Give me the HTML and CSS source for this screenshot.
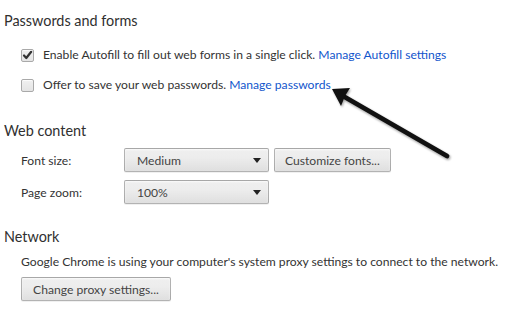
FILE: index.html
```html
<!DOCTYPE html>
<html>
<head>
<meta charset="utf-8">
<link rel="stylesheet" href="styles.css">
</head>
<body>
<div class="page">
  <section class="sec">
    <h3 class="sec-title">Passwords and forms</h3>
    <div class="sec-body">
      <div class="cb-row first">
        <span class="cb">
          <svg width="13" height="13" viewBox="0 0 13 13"><path d="M3 6.5 L5.3 9 L10.2 2.8" fill="none" stroke="#333" stroke-width="2.2" stroke-linecap="round" stroke-linejoin="round"/></svg>
        </span>
        <span class="cb-text">Enable Autofill to fill out web forms in a single click. <a class="link">Manage Autofill settings</a></span>
      </div>
      <div class="cb-row">
        <span class="cb"></span>
        <span class="cb-text">Offer to save your web passwords. <a class="link">Manage passwords</a></span>
      </div>
    </div>
  </section>

  <section class="sec web">
    <h3 class="sec-title">Web content</h3>
    <div class="sec-body">
      <div class="field-row first">
        <span class="field-label">Font size:</span>
        <span class="select">Medium<span class="caret"></span></span>
        <span class="btn">Customize fonts...</span>
      </div>
      <div class="field-row">
        <span class="field-label">Page zoom:</span>
        <span class="select">100%<span class="caret"></span></span>
      </div>
    </div>
  </section>

  <section class="sec net">
    <h3 class="sec-title">Network</h3>
    <div class="sec-body">
      <p class="net-text">Google Chrome is using your computer's system proxy settings to connect to the network.</p>
      <span class="btn proxy">Change proxy settings...</span>
    </div>
  </section>
</div>

<svg class="arrow" width="505" height="311" viewBox="0 0 505 311">
  <defs>
    <filter id="sh" x="-10%" y="-10%" width="120%" height="120%">
      <feGaussianBlur stdDeviation="0.8"/>
    </filter>
  </defs>
  <g opacity="0.35" filter="url(#sh)" transform="translate(1,1.5)">
    <line x1="447" y1="156" x2="343" y2="96" stroke="#000" stroke-width="5" stroke-linecap="round"/>
    <polygon points="332,89 350,88 345,96 341,106" fill="#000"/>
  </g>
  <line x1="447" y1="156" x2="343" y2="96" stroke="#111" stroke-width="4.8" stroke-linecap="round"/>
  <polygon points="332,89 350,88 345,96 341,106" fill="#111"/>
</svg>
</body>
</html>
```

FILE: styles.css
```css
html, body {
  margin: 0;
  padding: 0;
  background: #ffffff;
}

body {
  font-family: "Lato", "Open Sans", "Liberation Sans", sans-serif;
  font-size: 12.13px;
  color: #333333;
  width: 505px;
  height: 311px;
  overflow: hidden;
  position: relative;
}

.page {
  padding: 11px 0 0 4px;
}

.sec-title {
  margin: 0;
  font-size: 14.4px;
  font-weight: normal;
  line-height: 20px;
  height: 20px;
  color: #303030;
}

.sec-body {
  padding-left: 17px;
}

.cb-row {
  display: flex;
  align-items: center;
  height: 30px;
}

.cb-row.first {
  margin-top: 9px;
}

.cb {
  width: 11px;
  height: 11px;
  border: 1px solid #a9a9a9;
  border-radius: 2px;
  background: linear-gradient(#f0f0f0, #e4e4e4);
  box-shadow: inset 0 1px 1px rgba(255,255,255,0.8);
  position: relative;
  flex: none;
  margin-right: 9px;
  margin-top: 1px;
}

.cb svg {
  position: absolute;
  left: -1px;
  top: -1px;
}

.cb-text {
  white-space: nowrap;
  line-height: 20px;
}

.link {
  color: #1155cc;
  text-decoration: none;
}

.web {
  margin-top: 21px;
}

.field-row {
  display: flex;
  align-items: center;
  height: 24px;
  margin-top: 8px;
}

.field-row.first {
  margin-top: 7px;
}

.field-label {
  width: 103px;
  flex: none;
  white-space: nowrap;
}

.select, .btn {
  box-sizing: border-box;
  height: 24px;
  border: 1px solid rgba(0,0,0,0.25);
  border-radius: 2px;
  background: linear-gradient(#efefef, #ededed 38%, #dfdfdf);
  box-shadow: 0 1px 0 rgba(0,0,0,0.06), inset 0 1px 2px rgba(255,255,255,0.75);
  color: #444444;
  display: flex;
  align-items: center;
  white-space: nowrap;
}

.select {
  width: 145px;
  padding-left: 12px;
  position: relative;
}

.caret {
  position: absolute;
  right: 7px;
  top: 9px;
  width: 0;
  height: 0;
  border-left: 4px solid transparent;
  border-right: 4px solid transparent;
  border-top: 5px solid #222;
}

.btn {
  padding: 0 10px;
  margin-left: 5px;
}

.net {
  margin-top: 23px;
}

.net-text {
  margin: 5px 0 0 0;
  line-height: 20px;
  white-space: nowrap;
}

.btn.proxy {
  display: inline-flex;
  margin: 5px 0 0 0;
  width: 150px;
  justify-content: center;
  padding: 0;
}

.arrow {
  position: absolute;
  left: 0;
  top: 0;
  pointer-events: none;
}
```
